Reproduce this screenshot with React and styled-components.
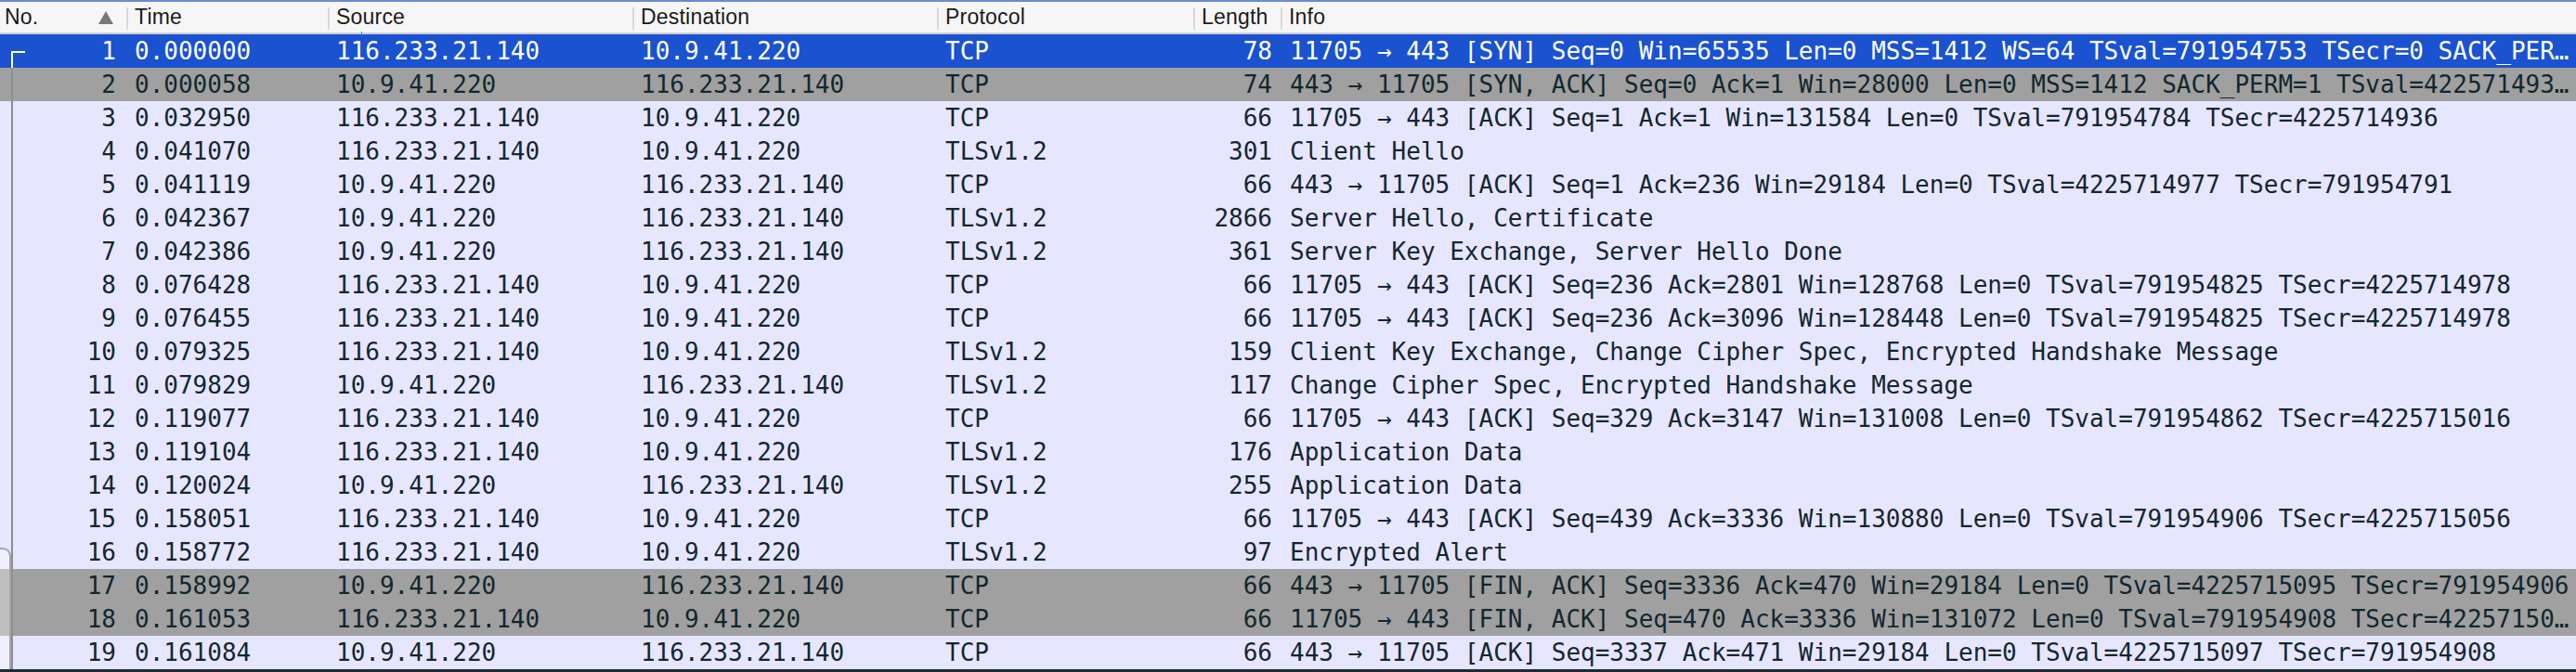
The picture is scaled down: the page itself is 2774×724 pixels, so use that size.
import React from "react"
import styled, { createGlobalStyle } from "styled-components"

const GlobalStyle = createGlobalStyle`
  html, body {
    margin: 0;
    padding: 0;
    background: #e7e6ff;
    overflow: hidden;
  }
`

const Table = styled.div`
  position: relative;
  width: 2774px;
  height: 724px;
  box-sizing: border-box;
  border-top: 2px solid #6a8bd0;
  border-bottom: 3px solid #1e2b35;
  background: #e7e6ff;
`

const COLS = "136px 217px 328px 328px 276px 94px 1fr"

const Header = styled.div`
  display: grid;
  grid-template-columns: ${COLS};
  height: 33px;
  background: #f6f6f6;
  border-bottom: 2px solid #cfcfcf;
  font-family: "Liberation Sans", Arial, sans-serif;
  font-size: 23px;
  letter-spacing: 0.2px;
  color: #1a1a1a;
`

const HeadCell = styled.div`
  position: relative;
  display: flex;
  align-items: center;
  padding: 0 9px;
  ${(p) =>
    p.$sep &&
    `
    &::before {
      content: "";
      position: absolute;
      left: 0;
      top: 6px;
      bottom: 3px;
      width: 2px;
      background: #d8d8d8;
    }
  `}
`

const NoHead = styled(HeadCell)`
  justify-content: space-between;
  padding: 0 14px 0 5px;
`

const Tick = styled.span`
  position: absolute;
  left: 36px;
  bottom: -3px;
  width: 1px;
  height: 4px;
  background: #4a7ad8;
`

const Row = styled.div`
  display: grid;
  grid-template-columns: ${COLS};
  height: 36px;
  line-height: 36px;
  font-family: "DejaVu Sans Mono", Menlo, monospace;
  font-size: 26px;
  background: ${(p) => (p.$selected ? "#1a52d0" : p.$gray ? "#a0a0a0" : "#e7e6ff")};
  color: ${(p) => (p.$selected ? "#ffffff" : "#12272e")};
`

const Cell = styled.div`
  position: relative;
  padding: ${(p) => (p.$right ? "0 9px 0 0" : "0 0 0 9px")};
  text-align: ${(p) => (p.$right ? "right" : "left")};
  white-space: nowrap;
  overflow: hidden;
  text-overflow: ellipsis;
`

const NoCell = styled(Cell)`
  padding-right: 11px;
`

const InfoCell = styled(Cell)`
  padding-left: 10px;
`

const RelLine = styled.span`
  position: absolute;
  left: 12px;
  width: 2px;
  top: ${(p) => (p.$first ? "18px" : "0")};
  bottom: 0;
  background: ${(p) => (p.$selected ? "#ffffff" : "#8a8f94")};
  &::after {
    content: "";
    display: ${(p) => (p.$first ? "block" : "none")};
    position: absolute;
    left: 0;
    top: 0;
    width: 15px;
    height: 2px;
    background: inherit;
  }
`

const EdgeTab = styled.div`
  position: absolute;
  left: 0;
  top: 588px;
  bottom: 0;
  width: 10px;
  border-top: 2px solid #a6a6a6;
  border-right: 2px solid #a6a6a6;
  border-top-right-radius: 9px;
  background: rgba(255, 255, 255, 0.33);
`

const A = "116.233.21.140"
const B = "10.9.41.220"

const packets = [
  ["0.000000", A, B, "TCP", 78, "11705 → 443 [SYN] Seq=0 Win=65535 Len=0 MSS=1412 WS=64 TSval=791954753 TSecr=0 SACK_PERM=1", "sel"],
  ["0.000058", B, A, "TCP", 74, "443 → 11705 [SYN, ACK] Seq=0 Ack=1 Win=28000 Len=0 MSS=1412 SACK_PERM=1 TSval=4225714936 TSecr=791954753 WS=128", "gray"],
  ["0.032950", A, B, "TCP", 66, "11705 → 443 [ACK] Seq=1 Ack=1 Win=131584 Len=0 TSval=791954784 TSecr=4225714936"],
  ["0.041070", A, B, "TLSv1.2", 301, "Client Hello"],
  ["0.041119", B, A, "TCP", 66, "443 → 11705 [ACK] Seq=1 Ack=236 Win=29184 Len=0 TSval=4225714977 TSecr=791954791"],
  ["0.042367", B, A, "TLSv1.2", 2866, "Server Hello, Certificate"],
  ["0.042386", B, A, "TLSv1.2", 361, "Server Key Exchange, Server Hello Done"],
  ["0.076428", A, B, "TCP", 66, "11705 → 443 [ACK] Seq=236 Ack=2801 Win=128768 Len=0 TSval=791954825 TSecr=4225714978"],
  ["0.076455", A, B, "TCP", 66, "11705 → 443 [ACK] Seq=236 Ack=3096 Win=128448 Len=0 TSval=791954825 TSecr=4225714978"],
  ["0.079325", A, B, "TLSv1.2", 159, "Client Key Exchange, Change Cipher Spec, Encrypted Handshake Message"],
  ["0.079829", B, A, "TLSv1.2", 117, "Change Cipher Spec, Encrypted Handshake Message"],
  ["0.119077", A, B, "TCP", 66, "11705 → 443 [ACK] Seq=329 Ack=3147 Win=131008 Len=0 TSval=791954862 TSecr=4225715016"],
  ["0.119104", A, B, "TLSv1.2", 176, "Application Data"],
  ["0.120024", B, A, "TLSv1.2", 255, "Application Data"],
  ["0.158051", A, B, "TCP", 66, "11705 → 443 [ACK] Seq=439 Ack=3336 Win=130880 Len=0 TSval=791954906 TSecr=4225715056"],
  ["0.158772", A, B, "TLSv1.2", 97, "Encrypted Alert"],
  ["0.158992", B, A, "TCP", 66, "443 → 11705 [FIN, ACK] Seq=3336 Ack=470 Win=29184 Len=0 TSval=4225715095 TSecr=791954906", "gray"],
  ["0.161053", A, B, "TCP", 66, "11705 → 443 [FIN, ACK] Seq=470 Ack=3336 Win=131072 Len=0 TSval=791954908 TSecr=4225715095", "gray"],
  ["0.161084", B, A, "TCP", 66, "443 → 11705 [ACK] Seq=3337 Ack=471 Win=29184 Len=0 TSval=4225715097 TSecr=791954908"],
]

function SortArrow() {
  return (
    <svg width="16" height="14" viewBox="0 0 16 14">
      <polygon points="8,0 16,14 0,14" fill="#787878" />
    </svg>
  )
}

export default function App() {
  return (
    <>
      <GlobalStyle />
      <Table>
        <Header>
          <NoHead>
            <span>No.</span>
            <SortArrow />
          </NoHead>
          <HeadCell $sep>Time</HeadCell>
          <HeadCell $sep>
            Source
            <Tick />
          </HeadCell>
          <HeadCell $sep>Destination</HeadCell>
          <HeadCell $sep>Protocol</HeadCell>
          <HeadCell $sep>Length</HeadCell>
          <HeadCell $sep>Info</HeadCell>
        </Header>
        {packets.map(([time, src, dst, proto, len, info, kind], i) => (
          <Row key={i} $selected={kind === "sel"} $gray={kind === "gray"}>
            <NoCell $right>
              <RelLine $first={i === 0} $selected={kind === "sel"} />
              {i + 1}
            </NoCell>
            <Cell>{time}</Cell>
            <Cell>{src}</Cell>
            <Cell>{dst}</Cell>
            <Cell>{proto}</Cell>
            <Cell $right>{len}</Cell>
            <InfoCell>{info}</InfoCell>
          </Row>
        ))}
        <EdgeTab />
      </Table>
    </>
  )
}
